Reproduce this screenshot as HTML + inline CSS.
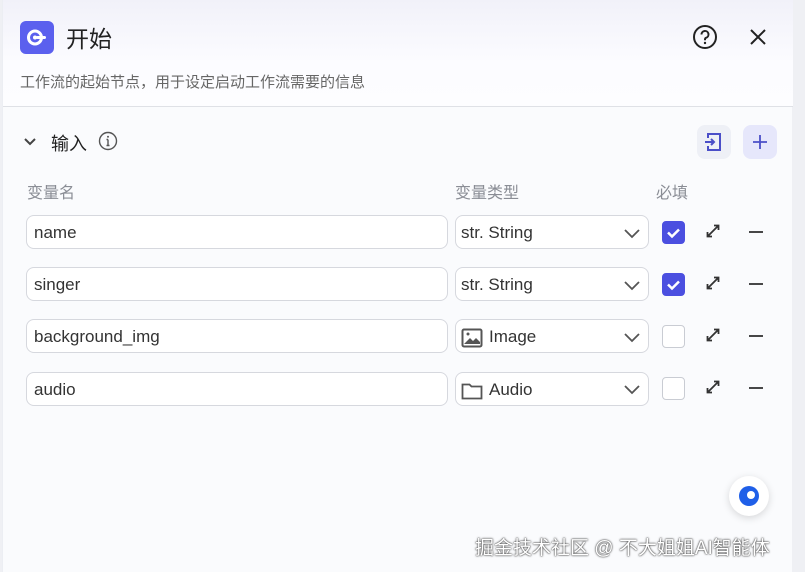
<!DOCTYPE html>
<html><head><meta charset="utf-8"><style>
*{box-sizing:border-box;margin:0;padding:0}
body{width:805px;height:572px;overflow:hidden;background:#eff0f4;font-family:"Liberation Sans","Noto Sans CJK SC",sans-serif;position:relative}
.panel{position:absolute;left:2px;top:0;width:790px;height:572px;background:#fafbfd;border-left:1px solid #eceef3}
.hdr{position:absolute;left:0;top:0;width:790px;height:107px;background:linear-gradient(#f1f1f9,#fcfcff 60%,#fdfdff);border-bottom:1px solid #dfe1e6}
.abs{position:absolute}
.inp{position:absolute;left:23px;width:422px;height:34px;border:1px solid #d6d8de;border-radius:8px;background:#fff;font-size:17px;color:#333;padding:7px 0 0 7px}
.sel{position:absolute;left:452px;width:194px;height:34px;border:1px solid #d6d8de;border-radius:8px;background:#fff;font-size:17px;color:#333;padding:7px 0 0 5px;display:flex;align-items:flex-start;gap:6px}
.cb{position:absolute;left:659px;width:23px;height:23px;border-radius:4px;border:1px solid #c9ccd3;background:#fff}
.cb.on{background:#4b4fe0;border-color:#4b4fe0}
.lbl{font-size:16px;color:#8a8d95}
</style></head><body>
<div class="panel">
<div class="hdr">
 <div class="abs" style="left:17px;top:21px;width:34px;height:33px;background:#5b60ee;border-radius:6px">
  <svg width="34" height="33" viewBox="0 0 34 33"><circle cx="15" cy="16.5" r="6.5" fill="none" stroke="#fff" stroke-width="3"/><circle cx="15" cy="16.5" r="2" fill="#fff"/><rect x="16" y="15" width="10" height="3" rx="1.5" fill="#fff"/></svg>
 </div>
 <div class="abs" style="left:63px;top:20px;font-size:23px;color:#222">开始</div>
 <svg class="abs" style="left:689px;top:24px" width="26" height="26" viewBox="0 0 26 26"><circle cx="13" cy="13" r="11" fill="none" stroke="#222" stroke-width="2"/><path d="M9.5 10.5a3.5 3.5 0 1 1 4.5 3.3c-.8.3-1 .8-1 1.7v.8" fill="none" stroke="#222" stroke-width="2"/><circle cx="13" cy="19" r="1.2" fill="#222"/></svg>
 <svg class="abs" style="left:745px;top:27px" width="20" height="20" viewBox="0 0 20 20"><path d="M3 3l14 14M17 3L3 17" stroke="#222" stroke-width="2"/></svg>
 <div class="abs" style="left:17px;top:71px;font-size:15px;color:#666">工作流的起始节点，用于设定启动工作流需要的信息</div>
</div>
<svg class="abs" style="left:20px;top:136px" width="14" height="12" viewBox="0 0 14 12"><path d="M2 3l5 5 5-5" fill="none" stroke="#444" stroke-width="2"/></svg>
<div class="abs" style="left:48px;top:130px;font-size:18px;color:#222">输入</div>
<svg class="abs" style="left:95px;top:131px" width="20" height="20" viewBox="0 0 20 20"><circle cx="10" cy="10" r="8.5" fill="none" stroke="#555" stroke-width="1.4"/><path d="M10 8.5v6M8.5 14.5h3M8.5 8.5h1.5" stroke="#555" stroke-width="1.4" fill="none"/><circle cx="10" cy="5.8" r="1" fill="#555"/></svg>
<div class="abs" style="left:694px;top:125px;width:34px;height:34px;border-radius:8px;background:#eef0f6"><svg width="34" height="34" viewBox="0 0 34 34"><path d="M11 13v-4h12v16H11v-4" fill="none" stroke="#4b4fc8" stroke-width="2"/><path d="M8 17h9M14 14l3 3-3 3" fill="none" stroke="#4b4fc8" stroke-width="2"/></svg></div>
<div class="abs" style="left:740px;top:125px;width:34px;height:34px;border-radius:8px;background:#e6e7fb"><svg width="34" height="34" viewBox="0 0 34 34"><path d="M17 10v14M10 17h14" stroke="#4b4fc8" stroke-width="1.8"/></svg></div>
<div class="abs lbl" style="left:24px;top:179px">变量名</div>
<div class="abs lbl" style="left:452px;top:179px">变量类型</div>
<div class="abs lbl" style="left:653px;top:179px">必填</div>

<div class="inp" style="top:215px">name</div>
<div class="inp" style="top:267px">singer</div>
<div class="inp" style="top:319px">background_img</div>
<div class="inp" style="top:372px">audio</div>

<div class="sel" style="top:215px">str. String</div>
<div class="sel" style="top:267px">str. String</div>
<div class="sel" style="top:319px"><svg width="22" height="20" viewBox="0 0 22 20" style="margin-top:1px"><rect x="1.5" y="1.5" width="19" height="17" rx="1.5" fill="none" stroke="#555" stroke-width="2"/><circle cx="7" cy="6" r="1.5" fill="#555"/><path d="M3 16l6-6 3 3 3-3 4 4v2H3z" fill="#555"/></svg>Image</div>
<div class="sel" style="top:372px"><svg width="22" height="20" viewBox="0 0 22 20" style="margin-top:1px"><path d="M1.5 3.5h7l2 2h10v12h-19z" fill="none" stroke="#555" stroke-width="1.8"/></svg>Audio</div>
<svg class="abs" style="left:620px;top:226px" width="18" height="170" viewBox="0 0 18 170"><g fill="none" stroke="#555" stroke-width="1.8"><path d="M2 4l7 7 7-7"/><path d="M2 56l7 7 7-7"/><path d="M2 108l7 7 7-7"/><path d="M2 160l7 7 7-7"/></g></svg>

<div class="cb on" style="top:221px"><svg width="21" height="21" viewBox="0 0 21 21"><path d="M5 10.5l4 4 7-7" fill="none" stroke="#fff" stroke-width="2.5"/></svg></div>
<div class="cb on" style="top:273px"><svg width="21" height="21" viewBox="0 0 21 21"><path d="M5 10.5l4 4 7-7" fill="none" stroke="#fff" stroke-width="2.5"/></svg></div>
<div class="cb" style="top:325px"></div>
<div class="cb" style="top:377px"></div>

<svg class="abs" style="left:701px;top:222px" width="60" height="180" viewBox="0 0 60 180"><g fill="none" stroke="#333" stroke-width="1.8">
<g><path d="M4 14l10-10M10 3.5h4.5v4.5M3.5 10v4.5h4.5"/><path d="M45 10h14"/></g>
<g transform="translate(0,52)"><path d="M4 14l10-10M10 3.5h4.5v4.5M3.5 10v4.5h4.5"/><path d="M45 10h14"/></g>
<g transform="translate(0,104)"><path d="M4 14l10-10M10 3.5h4.5v4.5M3.5 10v4.5h4.5"/><path d="M45 10h14"/></g>
<g transform="translate(0,156)"><path d="M4 14l10-10M10 3.5h4.5v4.5M3.5 10v4.5h4.5"/><path d="M45 10h14"/></g>
</g></svg>

<div class="abs" style="left:726px;top:476px;width:40px;height:40px;border-radius:50%;background:#fff;box-shadow:0 2px 8px rgba(0,0,0,.15)"><svg width="40" height="40" viewBox="0 0 40 40"><circle cx="20" cy="20" r="10" fill="#1f5fe8"/><circle cx="22" cy="19" r="4" fill="#fff"/></svg></div>
<div class="abs" style="left:472px;top:533px;font-size:19px;color:#fff;text-shadow:0 0 2px #333,0 0 1px #333">掘金技术社区 @ 不大姐姐AI智能体</div>
</div>
</body></html>
